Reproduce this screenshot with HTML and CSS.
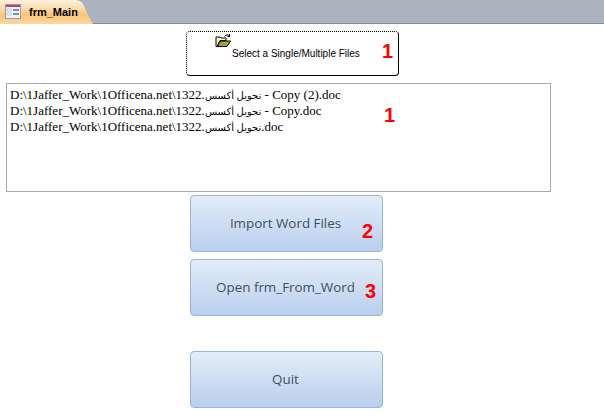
FILE: index.html
```html
<!DOCTYPE html>
<html lang="en">
<head>
<meta charset="utf-8">
<title>frm_Main</title>
<link rel="stylesheet" href="styles.css">
</head>
<body>
<div class="tabbar">
  <div class="tab">
    <svg class="tab-icon" width="16" height="15" viewBox="0 0 16 15">
      <rect x="0.5" y="0.5" width="15" height="14" fill="#eef1f6" stroke="#8d9db5"/>
      <rect x="1" y="1" width="14" height="2" fill="#b5476d"/>
      <rect x="2" y="5" width="4" height="2" fill="#fff" stroke="#9aa6b8" stroke-width="0.5"/>
      <rect x="2" y="9" width="4" height="2" fill="#fff" stroke="#9aa6b8" stroke-width="0.5"/>
      <rect x="8" y="5" width="6" height="2" fill="#7f8fa8"/>
      <rect x="8" y="9" width="6" height="2" fill="#7f8fa8"/>
    </svg>
    <span class="tab-label">frm_Main</span>
  </div>
</div>
<main class="form">
  <div class="picker">
    <svg class="folder" width="17" height="14" viewBox="0 0 17 14">
      <path d="M1 5V3H5L6 4H11V6.5H5L2 12.5H1Z" fill="#fffbb0" stroke="#000" stroke-width="1"/>
      <path d="M2.5 12.5L5 7H15.5L12 12.5Z" fill="#a8a030" stroke="#000" stroke-width="1"/>
      <path d="M9.5 2.5C11 0.5 13 0.5 14.5 2M14.5 0V2.5H12.5" fill="none" stroke="#000" stroke-width="1"/>
    </svg>
    <span class="picker-label">Select a Single/Multiple Files</span>
    <span class="mark mark-picker">1</span>
  </div>
  <div class="list">
    <div>D:\1Jaffer_Work\1Officena.net\1322.<span class="ar">تحويل أكسس</span> - Copy (2).doc</div>
    <div>D:\1Jaffer_Work\1Officena.net\1322.<span class="ar">تحويل أكسس</span> - Copy.doc</div>
    <div>D:\1Jaffer_Work\1Officena.net\1322.<span class="ar">تحويل أكسس</span>.doc</div>
    <span class="mark mark-list">1</span>
  </div>
  <div class="btn btn-import"><span class="btn-text">Import Word Files</span><span class="mark mark-two">2</span></div>
  <div class="btn btn-open"><span class="btn-text">Open frm_From_Word</span><span class="mark mark-three">3</span></div>
  <div class="btn btn-quit"><span class="btn-text">Quit</span></div>
</main>
</body>
</html>
```
FILE: styles.css
```css
html, body {
  margin: 0;
  padding: 0;
  background: #fff;
}
body {
  width: 604px;
  height: 419px;
  overflow: hidden;
  font-family: "Liberation Sans", sans-serif;
}
.tabbar {
  height: 23px;
  background: #abb3bf;
  border-bottom: 1px solid #858c96;
  display: flex;
}
.tab {
  width: 93px;
  height: 24px;
  flex: none;
  box-sizing: border-box;
  padding: 0 0 1px 5px;
  display: flex;
  align-items: center;
  background: linear-gradient(#fdf0dc 0%, #fcdcae 35%, #fbc477 62%, #fcd9a0 100%);
  clip-path: path("M0 0H74C80 0 82 2 84 6L90 19C91 21 92 23 93 24H0Z");
}
.tab-icon {
  flex: none;
}
.tab-label {
  margin-left: 8px;
  font-size: 11px;
  font-weight: 700;
  color: #000;
}
.form {
  position: relative;
  display: flex;
  flex-direction: column;
  align-items: flex-start;
}
.picker {
  position: relative;
  box-sizing: border-box;
  width: 213px;
  height: 45px;
  margin: 7px 0 0 186px;
  border: 1px solid #000;
  border-top-style: dotted;
  border-left-style: dotted;
  border-radius: 4px;
}
.folder {
  position: absolute;
  left: 28px;
  top: 2px;
}
.picker-label {
  position: absolute;
  left: 45px;
  top: 15px;
  font-size: 10px;
  line-height: 13px;
  color: #000;
  white-space: nowrap;
}
.mark {
  position: absolute;
  font-family: "Liberation Sans", sans-serif;
  font-weight: 700;
  font-size: 20px;
  line-height: 20px;
  color: #f00;
}
.mark-picker { left: 195px; top: 9px; }
.mark-list { left: 377px; top: 21px; }
.mark-two { left: 171px; top: 25px; }
.mark-three { left: 174px; top: 21px; }
.list {
  position: relative;
  box-sizing: border-box;
  width: 545px;
  height: 109px;
  margin: 7px 0 0 6px;
  padding: 3px 3px;
  border: 1px solid #a9a9ad;
  font-family: "Liberation Serif", "DejaVu Sans", serif;
  font-size: 13px;
  line-height: 16px;
  color: #000;
  white-space: nowrap;
}
.ar {
  font-size: 10px;
  line-height: 0;
}
.btn {
  position: relative;
  box-sizing: border-box;
  width: 193px;
  height: 57px;
  margin-left: 190px;
  padding: 0 2px 2px 0;
  border: 1px solid #98b4da;
  border-radius: 4px;
  background: linear-gradient(#e4ecf8, #b9cfed);
  display: flex;
  align-items: center;
  justify-content: center;
}
.btn-text {
  font-family: "Open Sans", sans-serif;
  font-size: 13.4px;
  color: #3f4f66;
  white-space: nowrap;
}
.btn-import {
  margin-top: 3px;
}
.btn-open {
  margin-top: 7px;
}
.btn-quit {
  margin-top: 35px;
}
```
